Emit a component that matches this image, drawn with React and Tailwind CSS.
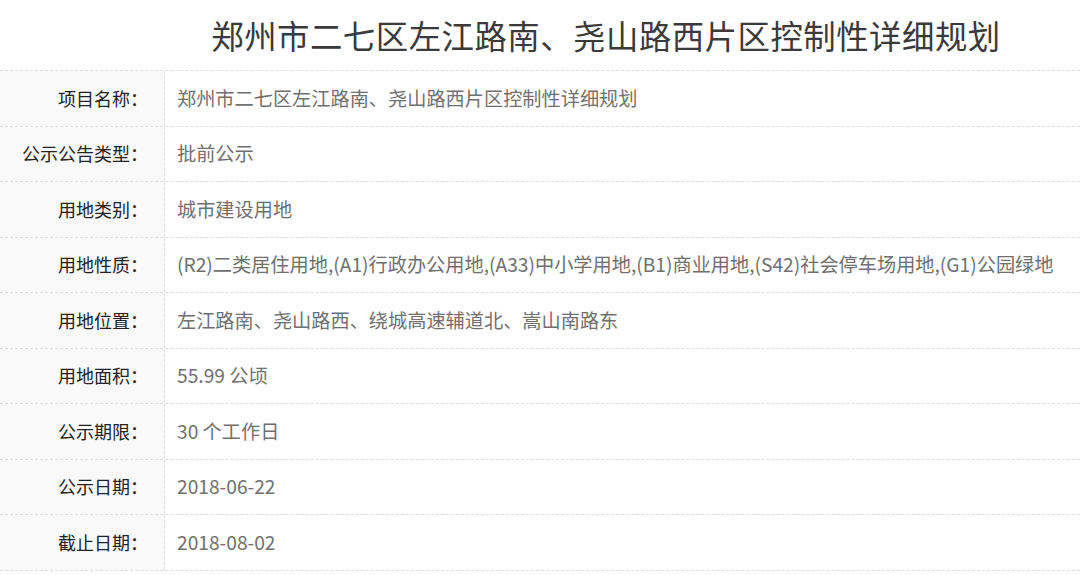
import React from 'react';

const rows = [
  ['项目名称：', '郑州市二七区左江路南、尧山路西片区控制性详细规划'],
  ['公示公告类型：', '批前公示'],
  ['用地类别：', '城市建设用地'],
  ['用地性质：', '(R2)二类居住用地,(A1)行政办公用地,(A33)中小学用地,(B1)商业用地,(S42)社会停车场用地,(G1)公园绿地'],
  ['用地位置：', '左江路南、尧山路西、绕城高速辅道北、嵩山南路东'],
  ['用地面积：', '55.99 公顷'],
  ['公示期限：', '30 个工作日'],
  ['公示日期：', '2018-06-22'],
  ['截止日期：', '2018-08-02'],
];

export default function App() {
  return (
    <div className="w-[1080px] h-[575px] overflow-hidden bg-white" style={{ fontFamily: '"Noto Sans CJK SC", "Noto Sans", sans-serif' }}>
      <h1 className="h-[70px] flex items-center justify-center pl-[132px] text-[32.4px] text-[#3a3a3a] font-normal leading-none tracking-[0.5px]">
        郑州市二七区左江路南、尧山路西片区控制性详细规划
      </h1>
      <div className="border-t border-dashed border-[#dcdcdc]">
        {rows.map(([label, value]) => (
          <div key={label} className="flex h-[55.5px] border-b border-dashed border-[#dcdcdc]">
            <div className="w-[165px] shrink-0 bg-[#f9f9f9] border-r border-dashed border-[#e2e2e2] flex items-center justify-end pr-[16px] text-[18px] text-[#222] font-normal">
              {label}
            </div>
            <div className="flex items-center pl-[12px] text-[19.2px] text-[#707070] whitespace-nowrap">
              {value}
            </div>
          </div>
        ))}
      </div>
    </div>
  );
}
